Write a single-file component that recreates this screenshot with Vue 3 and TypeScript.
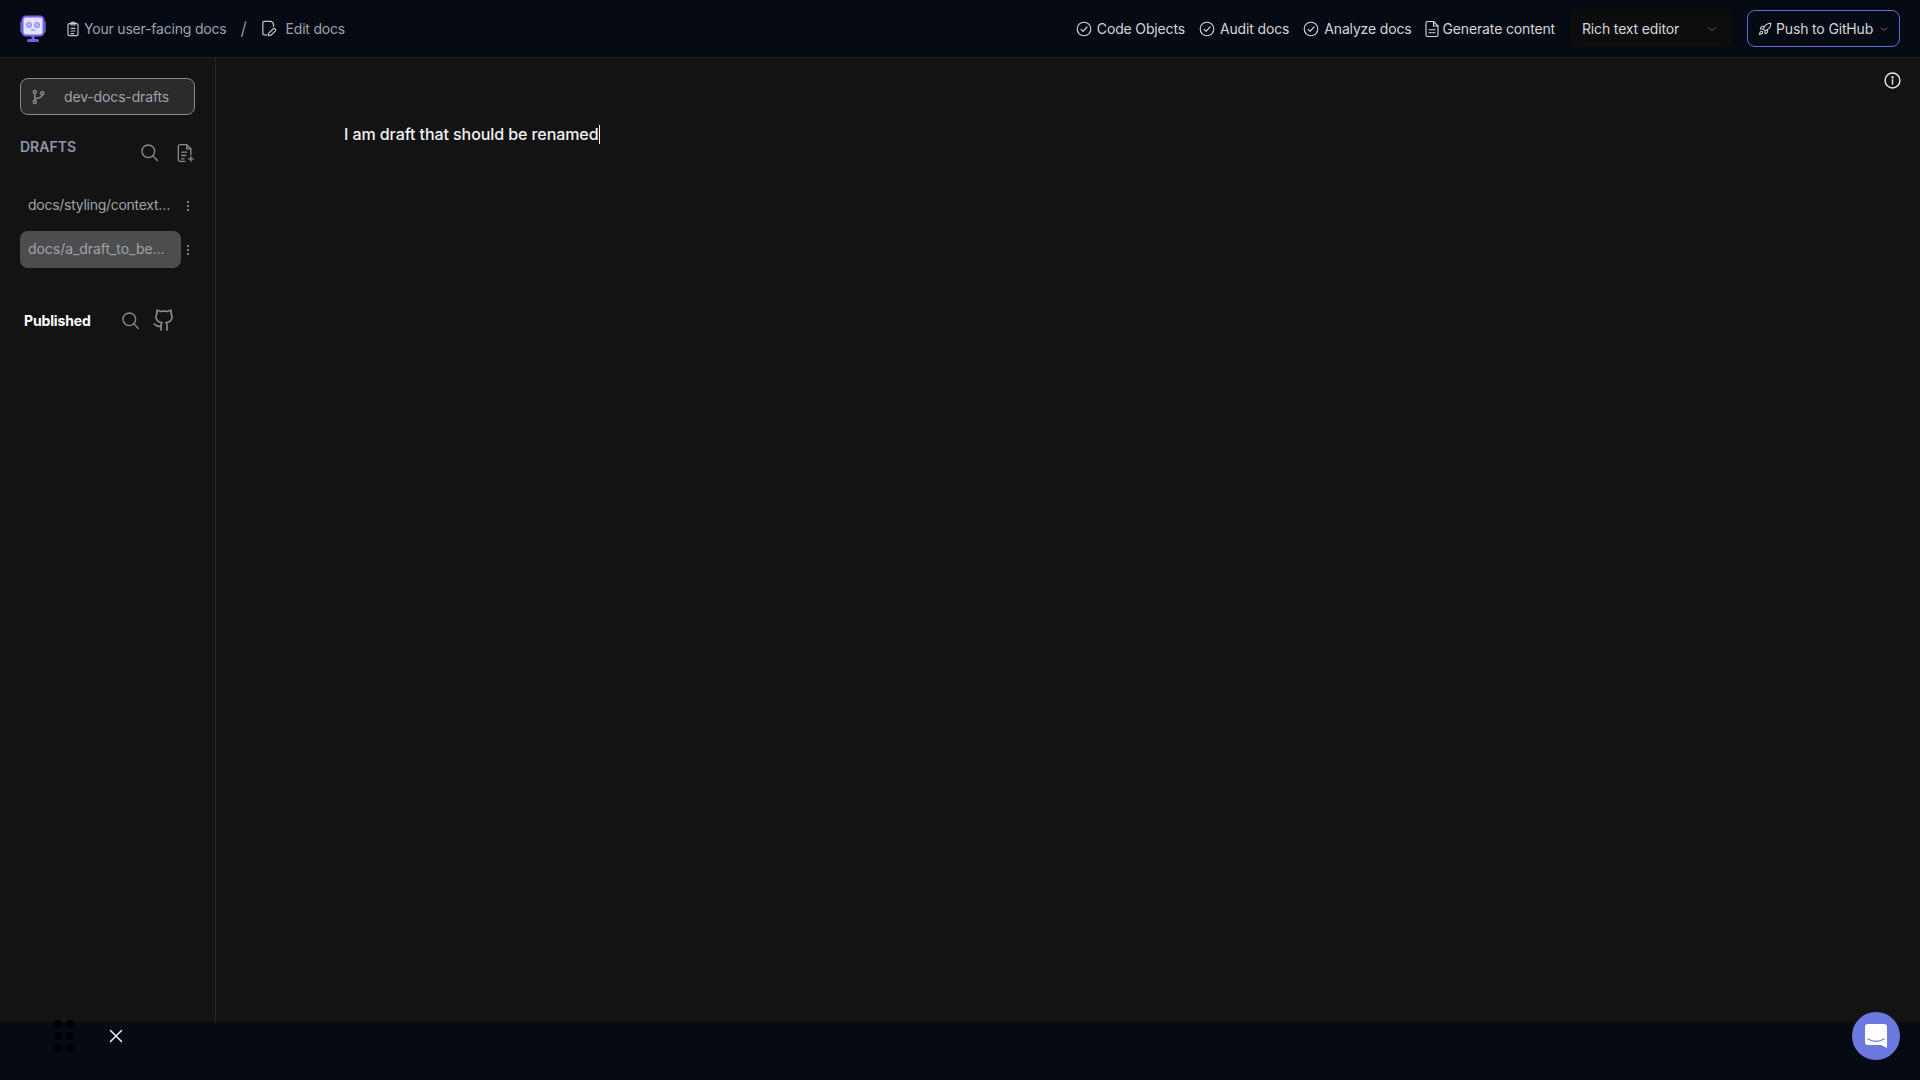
<script setup lang="ts">
const checks: string[] = ['Code Objects', 'Audit docs', 'Analyze docs']
</script>

<template>
  <div class="app">
    <header class="topbar">
      <svg class="logo" width="28" height="28" viewBox="0 0 28 28">
        <rect x="1" y="6" width="5" height="12" rx="2" fill="#3d5f86" />
        <rect x="22" y="6" width="5" height="12" rx="2" fill="#3d5f86" />
        <rect x="3.5" y="1.5" width="21" height="19" rx="3.5" fill="#dfe3ff" stroke="#7c5cf5" stroke-width="2" />
        <circle cx="10" cy="10" r="2.6" fill="#b7b5f6" stroke="#8f86f0" />
        <circle cx="18" cy="10" r="2.6" fill="#b7b5f6" stroke="#8f86f0" />
        <path d="M12 15h4" stroke="#7c6df0" stroke-width="1" />
        <rect x="12.5" y="21" width="3" height="3" fill="#6f63ef" />
        <rect x="8" y="24" width="12" height="3" rx="1.5" fill="#6f63ef" />
      </svg>
      <nav class="crumbs">
        <span class="crumb first">
          <svg width="16" height="16" viewBox="0 0 24 24" fill="none" stroke="#c4c7ce" stroke-width="1.7" stroke-linecap="round" stroke-linejoin="round">
            <rect x="4.5" y="4" width="15" height="18" rx="2" />
            <rect x="9" y="2" width="6" height="4" rx="1" />
            <path d="M9 11h6M9 15h6M9 19h4" />
          </svg>
          <span>Your user-facing docs</span>
        </span>
        <span class="slash">/</span>
        <span class="crumb second">
          <svg width="17" height="17" viewBox="0 0 24 24" fill="none" stroke="#c4c7ce" stroke-width="1.7" stroke-linecap="round" stroke-linejoin="round">
            <path d="M10 21H6a2 2 0 0 1-2-2V4a2 2 0 0 1 2-2h10l3 3v4" />
            <path d="M21.5 12.5a1.9 1.9 0 0 0-2.8-.2L12.5 18.5 12 22l3.5-.5 6.2-6.2a1.9 1.9 0 0 0-.2-2.8z" />
          </svg>
          <span>Edit docs</span>
        </span>
      </nav>
      <div class="actions">
        <span v-for="c in checks" :key="c" class="action">
          <svg width="16" height="16" viewBox="0 0 24 24" fill="none" stroke="#d5d7dc" stroke-width="1.7" stroke-linecap="round" stroke-linejoin="round">
            <circle cx="12" cy="12" r="10.2" />
            <path d="M7.5 12.5l3 3 6-6.5" />
          </svg>
          <span>{{ c }}</span>
        </span>
        <span class="action doc">
          <svg width="18" height="18" viewBox="0 0 24 24" fill="none" stroke="#d5d7dc" stroke-width="1.5" stroke-linecap="round" stroke-linejoin="round">
            <path d="M14 2H6a2 2 0 0 0-2 2v16a2 2 0 0 0 2 2h12a2 2 0 0 0 2-2V8z" />
            <path d="M14 2v6h6M8 13h8M8 17h8" />
          </svg>
          <span>Generate content</span>
        </span>
        <div class="select">
          <span>Rich text editor</span>
          <svg width="12" height="12" viewBox="0 0 12 12" fill="none" stroke="#666" stroke-width="1"><path d="M2.5 4.5 6 7.500l3.500-3" /></svg>
        </div>
        <button class="push">
          <svg width="14" height="14" viewBox="0 0 24 24" fill="none" stroke="#d5d7dc" stroke-width="1.8" stroke-linecap="round" stroke-linejoin="round">
            <path d="M4.5 16.5c-1.5 1.3-2 5-2 5s3.700-.5 5-2c.7-.8.7-2.100-.100-2.900a2.200 2.200 0 0 0-2.900-.100z" />
            <path d="M12 15l-3-3a22 22 0 0 1 2-4A12.900 12.900 0 0 1 22 2c0 2.700-.8 7.500-6 11a22 22 0 0 1-4 2z" />
            <path d="M9 12H4s.5-3 2-4c1.600-1.100 5 0 5 0M12 15v5s3-.5 4-2c1.100-1.600 0-5 0-5" />
          </svg>
          <span>Push to GitHub</span>
          <svg width="10" height="10" viewBox="0 0 12 12" fill="none" stroke="#777" stroke-width="1"><path d="M2 4.500 6 7.500l4-3" /></svg>
        </button>
      </div>
    </header>

    <div class="body">
      <aside class="sidebar">
        <div class="branch">
          <svg width="15" height="16" viewBox="0 0 24 24" fill="none" stroke="#8f8f8f" stroke-width="2.200" stroke-linecap="round" stroke-linejoin="round">
            <circle cx="6" cy="4" r="2.500" />
            <circle cx="6" cy="20" r="2.500" />
            <circle cx="18" cy="6" r="2.500" />
            <path d="M6 6.500v11M18 8.500c0 4-6 5.500-12 6.500" />
          </svg>
          <span>dev-docs-drafts</span>
        </div>

        <div class="drafts-head">
          <span class="drafts-title">DRAFTS</span>
          <div class="drafts-icons">
            <svg width="19" height="19" viewBox="0 0 24 24" fill="none" stroke="#8a8a8a" stroke-width="1.700" stroke-linecap="round"><circle cx="10.500" cy="10.500" r="8" /><path d="M16.500 16.500 22 22" /></svg>
            <svg width="20" height="20" viewBox="0 0 24 24" fill="none" stroke="#8a8a8a" stroke-width="1.600" stroke-linecap="round" stroke-linejoin="round">
              <path d="M12 22H6a2 2 0 0 1-2-2V4a2 2 0 0 1 2-2h8l5 5v7" />
              <path d="M14 2v5h5M8 11h6M8 15h5M8 19h3M19 16v6M16 19h6" />
            </svg>
          </div>
        </div>

        <div class="item">
          <span class="item-label tight">docs/styling/context…</span>
          <span class="kebab"><i></i><i></i><i></i></span>
        </div>
        <div class="item active">
          <span class="item-label">docs/a_draft_to_be...</span>
          <span class="kebab"><i></i><i></i><i></i></span>
        </div>

        <div class="published">
          <span class="published-title">Published</span>
          <svg width="19" height="19" viewBox="0 0 24 24" fill="none" stroke="#8a8a8a" stroke-width="1.700" stroke-linecap="round"><circle cx="10.500" cy="10.500" r="8" /><path d="M16.500 16.500 22 22" /></svg>
          <svg class="gh" width="24" height="24" viewBox="0 0 24 24" fill="none" stroke="#8a8a8a" stroke-width="1.700" stroke-linecap="round" stroke-linejoin="round">
            <path d="M15 22v-4a4.800 4.800 0 0 0-1-3.500c3 0 6-2 6-5.500.08-1.250-.27-2.480-1-3.500.28-1.150.28-2.350 0-3.500 0 0-1 0-3 1.500-2.640-.5-5.360-.5-8 0C6 2 5 2 5 2c-.3 1.150-.3 2.350 0 3.500A5.403 5.403 0 0 0 4 9c0 3.500 3 5.500 6 5.500-.39.49-.68 1.050-.85 1.650-.17.6-.22 1.230-.15 1.850v4" />
            <path d="M9 18c-4.510 2-5-2-7-2" />
          </svg>
        </div>
      </aside>

      <main class="editor">
        <svg class="info" width="17" height="17" viewBox="0 0 24 24" fill="none" stroke="#e8e8e8" stroke-width="2" stroke-linecap="round">
          <circle cx="12" cy="12" r="10.500" />
          <path d="M12 11v6" />
          <circle cx="12" cy="7.500" r="0.700" />
        </svg>
        <p class="line">I am draft that should be renamed<span class="caret"></span></p>
      </main>
    </div>

    <footer class="footer">
      <div class="grip"><i v-for="n in 6" :key="n"></i></div>
      <svg class="close" width="16" height="16" viewBox="0 0 16 16" stroke="#f0f0f0" stroke-width="1.500" stroke-linecap="round"><path d="M2.500 2.500l11 11M13.500 2.500l-11 11" /></svg>
      <div class="chat">
        <svg width="22" height="24" viewBox="0 0 22 24">
          <path d="M3 0h16a3 3 0 0 1 3 3v21l-6-3H3a3 3 0 0 1-3-3V3a3 3 0 0 1 3-3z" fill="#fff" />
          <path d="M3 15c5 3 11 3 16 0" fill="none" stroke="#6b78e0" stroke-width="1.200" stroke-linecap="round" />
        </svg>
      </div>
    </footer>
  </div>
</template>

<style>
html, body { margin: 0; background: #131313; }
</style>

<style scoped>
.app {
  width: 1920px;
  height: 1080px;
  display: flex;
  flex-direction: column;
  overflow: hidden;
  background: #131313;
  font-family: Inter, "Liberation Sans", sans-serif;
  font-size: 14px;
  letter-spacing: -0.15px;
  color: #d5d7dc;
}
.topbar {
  height: 57px;
  flex: none;
  display: flex;
  align-items: center;
  padding: 0 20px 0 19px;
  background: #050a13;
  border-bottom: 1px solid #1f2024;
}
.logo { flex: none; }
.crumbs { display: flex; align-items: center; margin-left: 18px; color: #9ea3ae; }
.crumb { display: flex; align-items: center; white-space: nowrap; }
.crumb.first { gap: 3px; letter-spacing: -0.2px; }
.crumb.second { gap: 9px; margin-left: 13px; letter-spacing: -0.2px; }
.slash { font-size: 18px; margin-left: 14px; color: #a8acb5; font-weight: 300; }
.actions { margin-left: auto; display: flex; align-items: center; }
.action { display: flex; align-items: center; gap: 5px; white-space: nowrap; margin-right: 14px; }
.action.doc { gap: 2px; margin-right: 15px; }
.action:nth-child(3) { margin-right: 11px; }
.select {
  width: 162px;
  height: 37px;
  box-sizing: border-box;
  display: flex;
  align-items: center;
  justify-content: space-between;
  padding: 0 14px 0 12px;
  background: #0d0d0d;
  border-radius: 8px;
}
.push {
  margin-left: 15px;
  width: 153px;
  height: 37px;
  box-sizing: border-box;
  display: flex;
  align-items: center;
  padding: 0 6px 0 10px;
  gap: 4px;
  background: transparent;
  border: 1px solid #5d6bd6;
  border-radius: 8px;
  color: #d5d7dc;
  font: inherit;
  letter-spacing: inherit;
}
.push span { white-space: nowrap; }
.push svg:last-child { margin-left: 2px; }
.body { flex: 1; display: flex; min-height: 0; }
.sidebar {
  width: 215px;
  flex: none;
  border-right: 1px solid #26272a;
  padding-top: 20px;
}
.branch {
  margin-left: 20px;
  width: 175px;
  height: 37px;
  box-sizing: border-box;
  display: flex;
  align-items: center;
  gap: 18px;
  padding-left: 10px;
  background: #2b2b2b;
  border: 1px solid #8a8a8a;
  border-radius: 8px;
  color: #9ea3ae;
}
.drafts-head { display: flex; margin-top: 24px; padding-left: 20px; height: 43px; }
.drafts-title { font-size: 14px; font-weight: 600; color: #8f97a8; line-height: 16px; letter-spacing: 0; }
.drafts-icons { display: flex; gap: 16px; margin-left: auto; margin-right: 20px; margin-top: 4px; align-self: flex-start; }
.item {
  display: flex;
  align-items: center;
  height: 37px;
  margin: 5px 0 0 20px;
  width: 190px;
  color: #9ea3ae;
}
.item-label {
  width: 161px;
  height: 37px;
  box-sizing: border-box;
  padding-left: 8px;
  line-height: 36px;
  border-radius: 8px;
  white-space: nowrap;
  letter-spacing: -0.05px;
}
.item-label.tight { letter-spacing: -0.27px; }
.item.active { margin-top: 7px; }
.item.active .item-label { background: #4d4d4d; }
.kebab { display: flex; flex-direction: column; gap: 2px; margin-left: 6px; }
.kebab i { width: 2px; height: 2px; border-radius: 50%; background: #a5a5a5; display: block; }
.published { display: flex; align-items: center; margin-top: 40px; padding-left: 24px; height: 24px; }
.published-title { width: 97px; font-weight: 700; color: #fff; font-size: 14px; }
.gh { margin-left: 12px; }
.editor { flex: 1; position: relative; padding: 64px 0 0 128px; }
.info { position: absolute; top: 14px; right: 19px; }
.line {
  margin: 0;
  font-size: 16px;
  font-weight: 500;
  line-height: 24px;
  color: #f2f2f2;
  letter-spacing: -0.08px;
}
.caret { display: inline-block; width: 1px; height: 19px; background: #fff; vertical-align: -4px; }
.footer {
  height: 58px;
  flex: none;
  position: relative;
  display: flex;
  align-items: flex-start;
  box-sizing: border-box;
  background: #050a13;
  padding: 6px 0 0 108px;
}
.grip {
  position: absolute;
  left: 54px;
  top: -2px;
  display: grid;
  grid-template-columns: 8px 8px;
  gap: 4px;
}
.grip i { width: 8px; height: 8px; border-radius: 50%; background: #000; display: block; }
.chat {
  position: absolute;
  right: 20px;
  top: -10px;
  width: 48px;
  height: 48px;
  border-radius: 50%;
  background: #6b78e0;
  display: flex;
  align-items: center;
  justify-content: center;
}
</style>
